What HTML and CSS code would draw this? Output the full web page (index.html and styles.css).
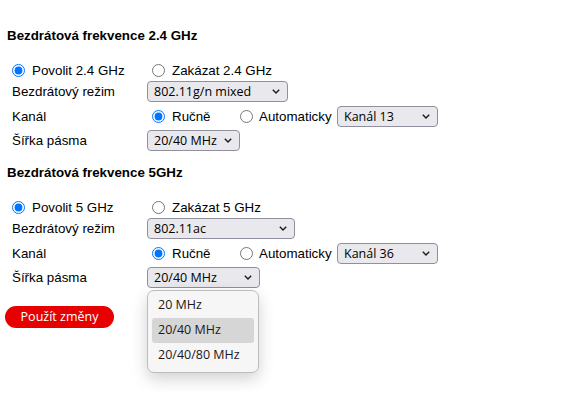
FILE: index.html
```html
<!DOCTYPE html>
<html lang="cs">
<head>
<meta charset="utf-8">
<title>Bezdrátová síť</title>
<link rel="stylesheet" href="styles.css">
</head>
<body>
<div class="page">
  <section class="band">
    <h2 class="band-title">Bezdrátová frekvence 2.4 GHz</h2>
    <div class="grid">
      <label class="opt opt-first"><input type="radio" name="en24" checked><span>Povolit 2.4 GHz</span></label>
      <label class="opt"><input type="radio" name="en24"><span>Zakázat 2.4 GHz</span></label>

      <div class="lbl">Bezdrátový režim</div>
      <div class="cell"><div class="sel w141"><span>802.11g/n mixed</span><svg class="chev" width="8" height="5" viewBox="0 0 8 5"><path d="M0.8 0.8 L4 4 L7.2 0.8" fill="none" stroke="#1a1a1a" stroke-width="1.4"/></svg></div></div>

      <div class="lbl">Kanál</div>
      <div class="cell">
        <label class="opt o1"><input type="radio" name="ch24" checked><span>Ručně</span></label>
        <label class="opt o2"><input type="radio" name="ch24"><span>Automaticky</span></label>
        <div class="sel w100"><span>Kanál 13</span><svg class="chev" width="8" height="5" viewBox="0 0 8 5"><path d="M0.8 0.8 L4 4 L7.2 0.8" fill="none" stroke="#1a1a1a" stroke-width="1.4"/></svg></div>
      </div>

      <div class="lbl">Šířka pásma</div>
      <div class="cell"><div class="sel w93"><span>20/40 MHz</span><svg class="chev" width="8" height="5" viewBox="0 0 8 5"><path d="M0.8 0.8 L4 4 L7.2 0.8" fill="none" stroke="#1a1a1a" stroke-width="1.4"/></svg></div></div>
    </div>
  </section>

  <section class="band band2">
    <h2 class="band-title">Bezdrátová frekvence 5GHz</h2>
    <div class="grid">
      <label class="opt opt-first"><input type="radio" name="en5" checked><span>Povolit 5 GHz</span></label>
      <label class="opt"><input type="radio" name="en5"><span>Zakázat 5 GHz</span></label>

      <div class="lbl">Bezdrátový režim</div>
      <div class="cell"><div class="sel w148"><span>802.11ac</span><svg class="chev" width="8" height="5" viewBox="0 0 8 5"><path d="M0.8 0.8 L4 4 L7.2 0.8" fill="none" stroke="#1a1a1a" stroke-width="1.4"/></svg></div></div>

      <div class="lbl">Kanál</div>
      <div class="cell">
        <label class="opt o1"><input type="radio" name="ch5" checked><span>Ručně</span></label>
        <label class="opt o2"><input type="radio" name="ch5"><span>Automaticky</span></label>
        <div class="sel w100"><span>Kanál 36</span><svg class="chev" width="8" height="5" viewBox="0 0 8 5"><path d="M0.8 0.8 L4 4 L7.2 0.8" fill="none" stroke="#1a1a1a" stroke-width="1.4"/></svg></div>
      </div>

      <div class="lbl">Šířka pásma</div>
      <div class="cell">
        <div class="dd-wrap">
          <div class="sel w113"><span>20/40 MHz</span><svg class="chev" width="8" height="5" viewBox="0 0 8 5"><path d="M0.8 0.8 L4 4 L7.2 0.8" fill="none" stroke="#1a1a1a" stroke-width="1.4"/></svg></div>
          <ul class="dropdown">
            <li>20 MHz</li>
            <li class="active">20/40 MHz</li>
            <li>20/40/80 MHz</li>
          </ul>
        </div>
      </div>
    </div>
  </section>

  <button class="apply" type="button">Použít změny</button>
</div>
</body>
</html>
```

FILE: styles.css
```css
html, body {
  margin: 0;
  padding: 0;
  background: #ffffff;
}

body {
  min-height: 401px;
}

.page {
  min-height: 401px;
  box-sizing: border-box;
  padding: 28px 0 0 7px;
  font-family: "Liberation Sans", Arial, sans-serif;
  font-size: 13.33px;
  color: #000000;
}

.band-title {
  margin: 0 0 16px 0;
  font-size: 13.33px;
  line-height: 16px;
  font-weight: bold;
}

.band2 {
  margin-top: 14px;
}

.grid {
  display: grid;
  grid-template-columns: 140px auto;
  grid-template-rows: 21px 25px 24px 21px;
  align-items: start;
}

.lbl {
  padding-left: 5px;
  height: 21px;
  line-height: 21px;
}

.cell {
  display: flex;
  align-items: center;
  height: 21px;
}

.opt {
  display: flex;
  align-items: center;
  height: 21px;
  line-height: 21px;
}

.opt input {
  width: 13px;
  height: 13px;
  margin: 0 7px 0 5px;
  accent-color: #0075ff;
}

.o1 {
  width: 88px;
}

.o2 {
  width: 102px;
}

.o2 input {
  margin-right: 6px;
}

.sel {
  box-sizing: border-box;
  height: 21px;
  display: flex;
  align-items: center;
  justify-content: space-between;
  padding: 0 7px 0 6px;
  background: #e9e9ed;
  border: 1px solid #8f8f9d;
  border-radius: 4px;
  font-family: "Open Sans", "Noto Sans", sans-serif;
  font-size: 12.5px;
  color: #000000;
}

.chev {
  display: block;
  flex: none;
}

.w141 { width: 141px; }
.w148 { width: 148px; }
.w100 { width: 101px; }
.w93 { width: 93px; }
.w113 { width: 113px; }

.dd-wrap {
  position: relative;
}

.dropdown {
  position: absolute;
  top: 23px;
  left: 0;
  box-sizing: border-box;
  width: 112px;
  height: 83px;
  margin: 0;
  padding: 2px 4px;
  list-style: none;
  background: #f6f6f6;
  border: 1px solid #bdbdbd;
  border-radius: 7px;
  box-shadow: 0 6px 16px rgba(0, 0, 0, 0.18);
  font-family: "Open Sans", "Noto Sans", sans-serif;
  font-size: 12.5px;
  color: #1a1a1a;
  z-index: 2;
}

.dropdown li {
  height: 25px;
  line-height: 24px;
  padding-left: 6px;
  border-radius: 3px;
}

.dropdown li.active {
  background: #d6d6d6;
}

.apply {
  display: block;
  margin: 18px 0 0 -2px;
  width: 109px;
  height: 22px;
  padding: 0;
  border: none;
  border-radius: 11px;
  background: #e60000;
  color: #ffffff;
  font-family: "Open Sans", "Noto Sans", sans-serif;
  font-size: 12.5px;
  line-height: 22px;
  text-align: center;
}
```
